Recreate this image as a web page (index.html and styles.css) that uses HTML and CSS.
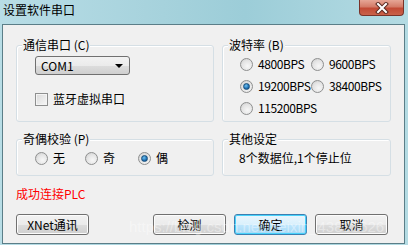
FILE: index.html
```html
<!DOCTYPE html>
<html lang="zh">
<head>
    <meta charset="UTF-8">
    <title>设置软件串口</title>
    <link rel="stylesheet" href="styles.css">
</head>
<body>
    <div class="window">
        <div class="titlebar">
            <span class="title">设置软件串口</span>
            <div class="close-btn">
                <svg width="16" height="12" viewBox="0 0 16 12">
                    <path d="M4 2 L12 10 M12 2 L4 10" stroke="#5a2a22" stroke-width="4" stroke-linecap="square"/>
                    <path d="M4 2 L12 10 M12 2 L4 10" stroke="#ffffff" stroke-width="2" stroke-linecap="square"/>
                </svg>
            </div>
        </div>

        <div class="client">
            <div class="groups">
                <div class="group">
                    <div class="group-title">通信串口 (C)</div>
                    <div class="port-body">
                        <div class="combo">
                            <span>COM1</span>
                            <span class="combo-arrow"></span>
                        </div>
                        <label class="check-row">
                            <span class="checkbox"></span>
                            <span>蓝牙虚拟串口</span>
                        </label>
                    </div>
                </div>

                <div class="group">
                    <div class="group-title">波特率 (B)</div>
                    <div class="baud-grid">
                        <div class="opt"><span class="radio"></span>4800BPS</div>
                        <div class="opt"><span class="radio"></span>9600BPS</div>
                        <div class="opt"><span class="radio checked"></span>19200BPS</div>
                        <div class="opt"><span class="radio"></span>38400BPS</div>
                        <div class="opt"><span class="radio"></span>115200BPS</div>
                    </div>
                </div>

                <div class="group">
                    <div class="group-title">奇偶校验 (P)</div>
                    <div class="parity-row">
                        <div class="opt w50"><span class="radio"></span>无</div>
                        <div class="opt w53"><span class="radio"></span>奇</div>
                        <div class="opt"><span class="radio checked"></span>偶</div>
                    </div>
                </div>

                <div class="group">
                    <div class="group-title">其他设定</div>
                    <div class="other-text">8个数据位,1个停止位</div>
                </div>
            </div>

            <div class="status">成功连接PLC</div>

            <div class="buttons">
                <button class="btn">XNet通讯</button>
                <div class="spacer"></div>
                <button class="btn">检测</button>
                <button class="btn focused">确定</button>
                <button class="btn">取消</button>
            </div>

            <div class="watermark">https://blog.csdn.net/weixin_43833626</div>
        </div>
    </div>
</body>
</html>
```

FILE: styles.css
```css
body {
    margin: 0;
    font-family: "Noto Sans CJK SC", "Liberation Sans", sans-serif;
    font-size: 12px;
    color: #000;
}

.window {
    width: 408px;
    height: 245px;
    background: linear-gradient(90deg, #b8dde6 0%, #a6d2dc 40%, #9ccdd8 60%, #b4dbe3 100%);
    display: flex;
    flex-direction: column;
}

.titlebar {
    height: 24px;
    display: flex;
    align-items: flex-start;
    position: relative;
}

.title {
    margin: 2px 0 0 3px;
    line-height: 16px;
    font-size: 12px;
    color: #000;
}

.close-btn {
    position: absolute;
    left: 359px;
    top: 0;
    width: 43px;
    height: 15px;
    border: 1px solid #7a3329;
    border-top: none;
    border-radius: 0 0 4px 4px;
    background: linear-gradient(#e6a696 0%, #d47b68 45%, #c24a35 55%, #c9624a 100%);
    display: flex;
    align-items: center;
    justify-content: center;
}

.client {
    position: relative;
    margin-left: 2px;
    width: 401px;
    height: 218px;
    border: 1px solid #5b7e88;
    background: #f0f0f0;
    display: flex;
    flex-direction: column;
    overflow: hidden;
}

.groups {
    display: grid;
    grid-template-columns: 198px 169px;
    grid-template-rows: 77px 37px;
    column-gap: 8px;
    row-gap: 17px;
    padding: 20px 0 0 13px;
}

.group {
    border: 1px solid #d5dfe5;
    border-radius: 3px;
    box-shadow: inset 1px 1px 0 #fff;
}

.group-title {
    width: fit-content;
    margin: -8px 0 0 5px;
    padding: 0 1px;
    line-height: 14px;
    background: #f0f0f0;
}

.port-body {
    display: flex;
    flex-direction: column;
    padding: 4px 0 0 18px;
}

.combo {
    height: 17px;
    border: 1px solid #707070;
    border-radius: 3px;
    background: linear-gradient(#f2f2f2 0%, #ebebeb 50%, #dddddd 51%, #cfcfcf 100%);
    display: flex;
    align-items: center;
    justify-content: space-between;
    padding: 0 6px 0 5px;
    width: 82px;
    line-height: 17px;
}

.combo-arrow {
    width: 0;
    height: 0;
    border-left: 4px solid transparent;
    border-right: 4px solid transparent;
    border-top: 4px solid #000;
}

.check-row {
    display: flex;
    align-items: center;
    gap: 5px;
    margin-top: 17px;
    line-height: 14px;
}

.checkbox {
    width: 11px;
    height: 11px;
    border: 1px solid #8e8f8f;
    background: linear-gradient(135deg, #d9d9d9, #f7f7f7);
    box-shadow: inset 0 0 0 1px #f4f4f4;
}

.baud-grid {
    display: grid;
    grid-template-columns: 71px auto;
    grid-auto-rows: 22px;
    padding: 1px 0 0 17px;
    letter-spacing: -0.4px;
}

.opt {
    display: flex;
    align-items: center;
    gap: 5px;
    line-height: 14px;
    white-space: nowrap;
}

.radio {
    width: 11px;
    height: 11px;
    border: 1px solid #8e8f8f;
    border-radius: 50%;
    background: radial-gradient(circle at 60% 65%, #f7f7f7 0%, #e4e4e4 55%, #c8c8c8 100%);
    flex: none;
    display: flex;
    align-items: center;
    justify-content: center;
}

.radio.checked::after {
    content: "";
    width: 5px;
    height: 5px;
    border-radius: 50%;
    background: radial-gradient(circle at 40% 35%, #6fc2f0 0%, #1e6fb3 60%, #0c3f6e 100%);
    border: 1px solid #194f7a;
}

.parity-row {
    display: flex;
    padding: 5px 0 0 18px;
}

.w50 { width: 50px; }
.w53 { width: 53px; }

.other-text {
    padding: 5px 0 0 16px;
    line-height: 14px;
}

.status {
    margin: 11px 0 0 13px;
    line-height: 14px;
    color: #ff0000;
}

.buttons {
    display: flex;
    gap: 8px;
    margin: 13px 0 0 13px;
    width: 372px;
}

.spacer {
    flex: 1;
}

.btn {
    width: 73px;
    height: 21px;
    padding: 0;
    border: 1px solid #707070;
    border-radius: 3px;
    background: linear-gradient(#f2f2f2 0%, #ebebeb 50%, #dddddd 51%, #cfcfcf 100%);
    box-shadow: inset 0 0 0 1px #fcfcfc;
    font-family: "Noto Sans CJK SC", "Liberation Sans", sans-serif;
    font-size: 12px;
    color: #000;
    line-height: 18px;
}

.btn.focused {
    border-color: #3c7fb1;
    box-shadow: inset 0 0 0 1px #48d2fb;
    background: linear-gradient(#eaf6fd 0%, #d9f0fc 50%, #bee6fd 51%, #a7d9f5 100%);
}

.watermark {
    position: absolute;
    left: 126px;
    top: 193px;
    font-family: "Liberation Sans", sans-serif;
    font-size: 15px;
    color: rgba(255, 255, 255, 0.4);
    white-space: nowrap;
    pointer-events: none;
}
```
